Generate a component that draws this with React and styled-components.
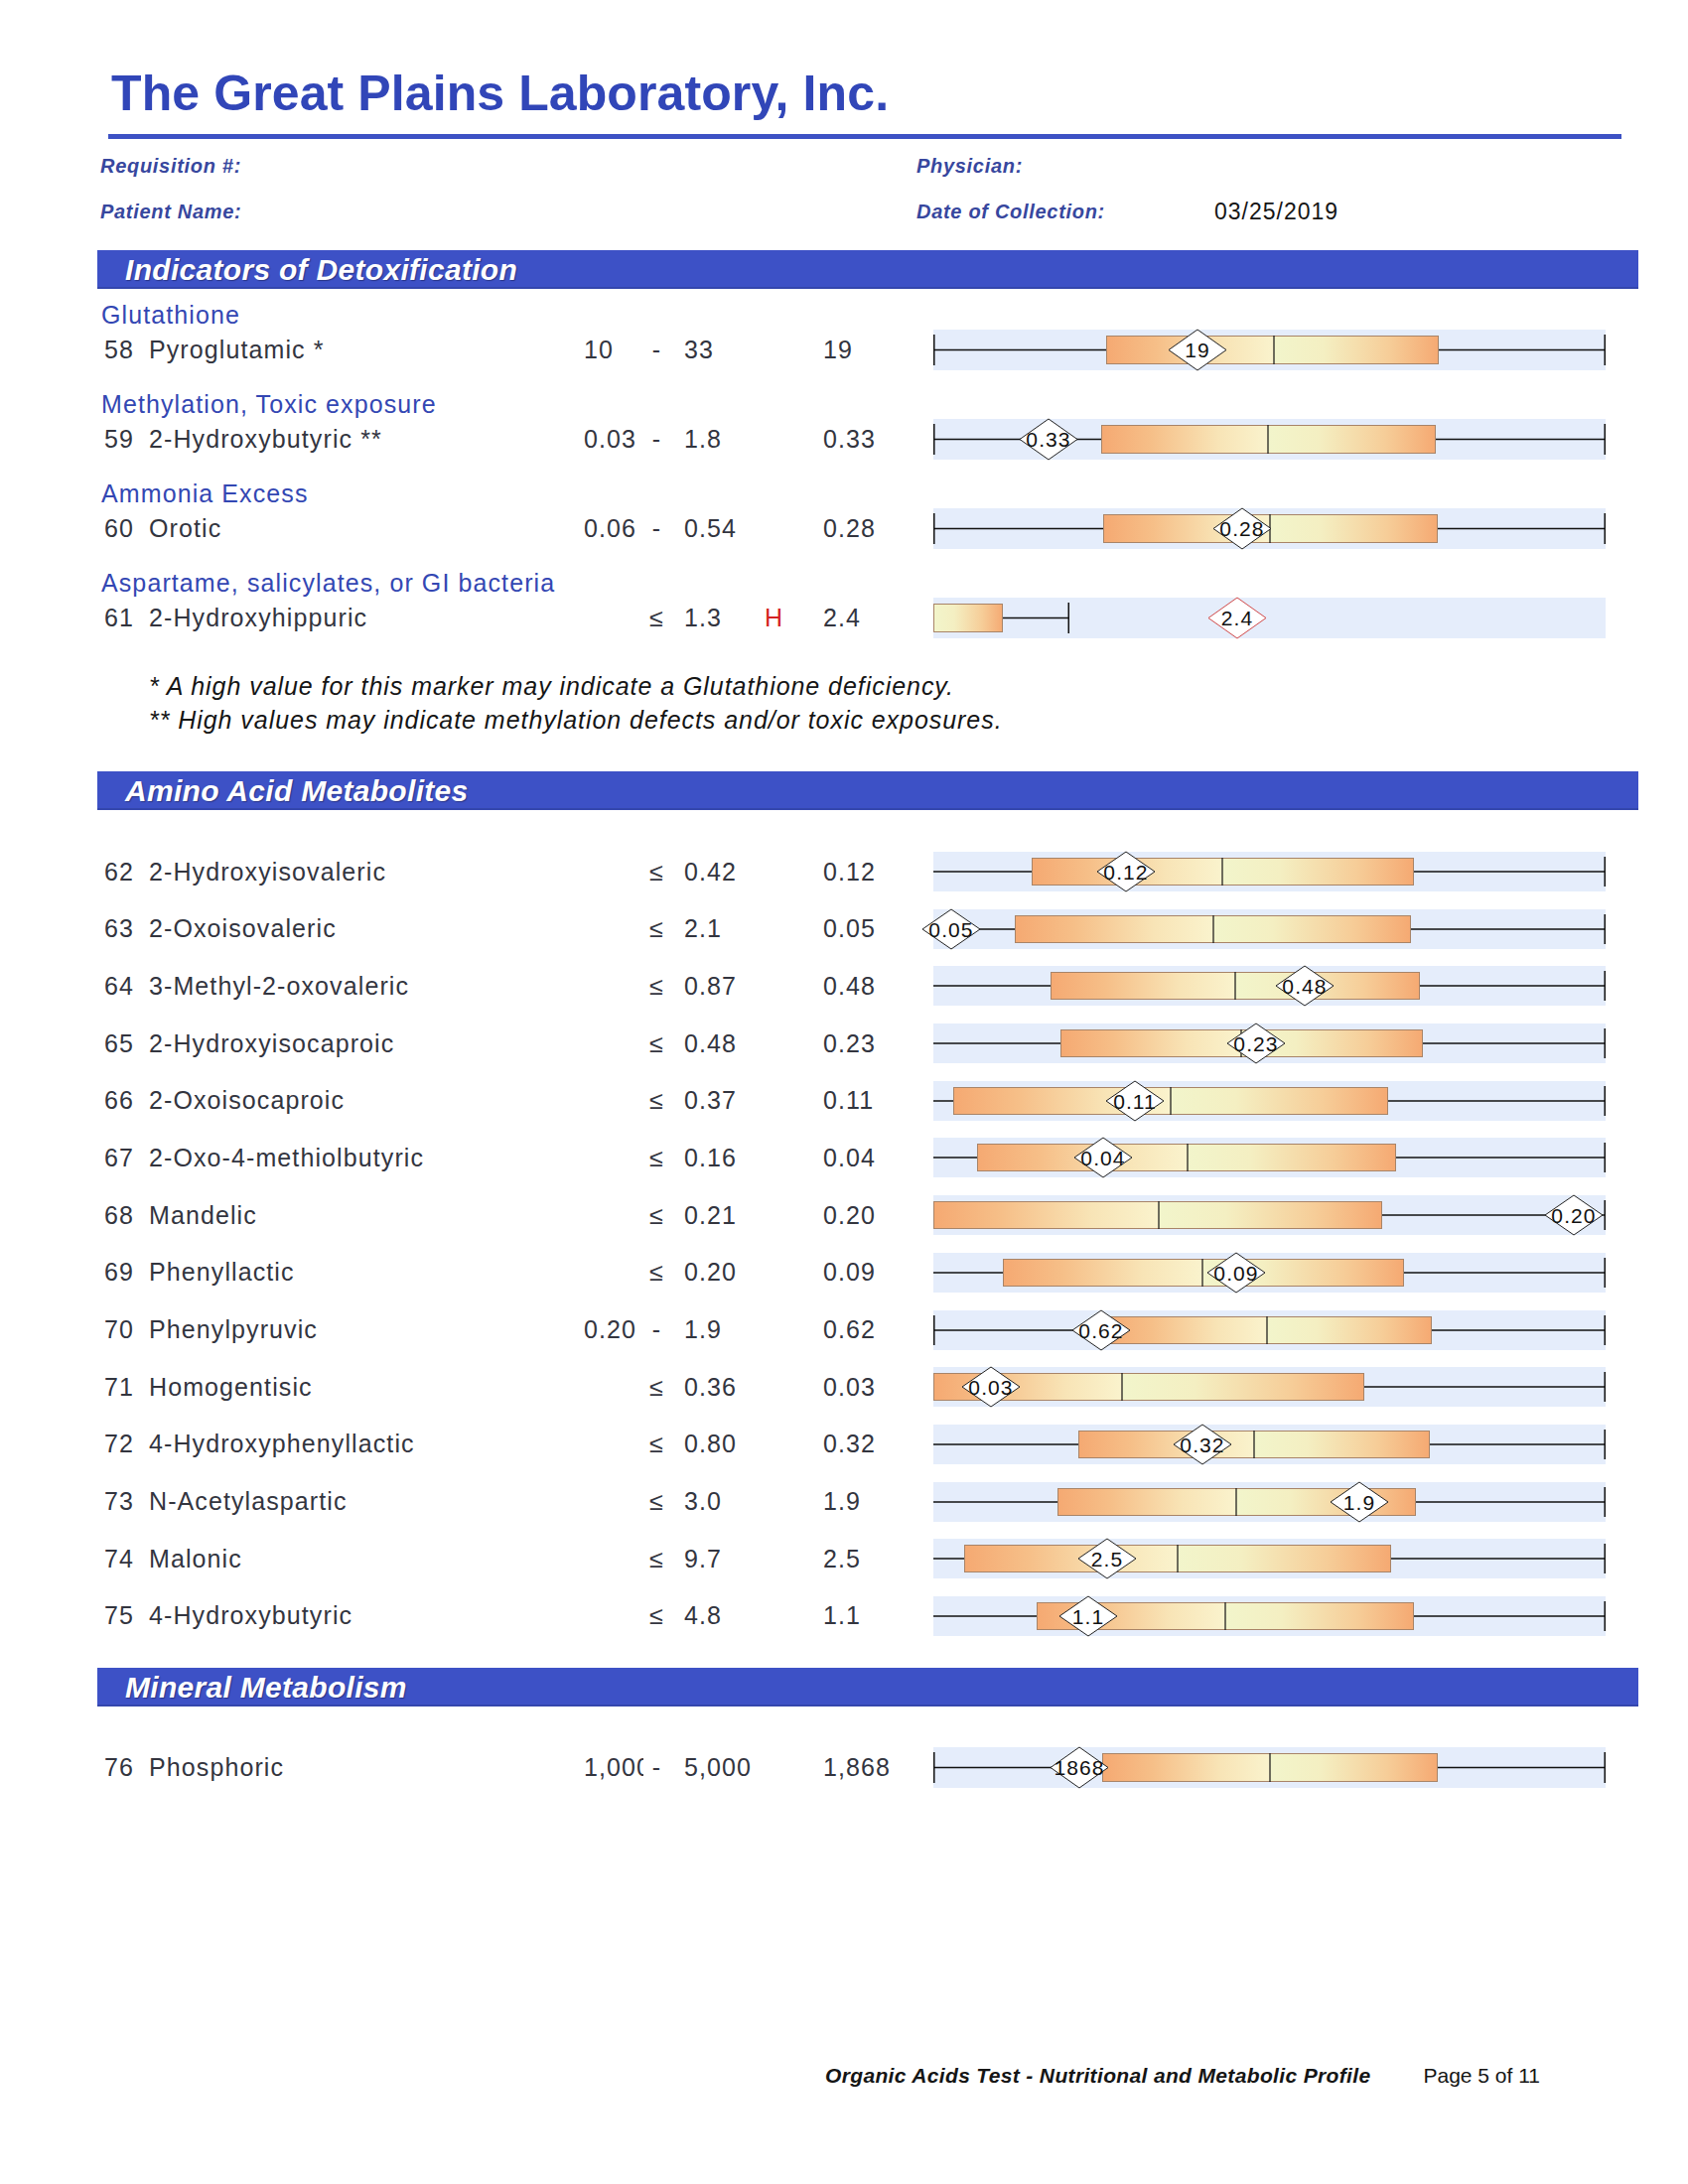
import React, { useId } from "react";
import styled, { createGlobalStyle } from "styled-components";

const Global = createGlobalStyle`
  html, body { margin: 0; padding: 0; background: #ffffff; }
  body { font-family: "Liberation Sans", Arial, sans-serif; }
`;

const Page = styled.div`
  width: 1700px;
  min-height: 2200px;
  box-sizing: border-box;
  padding: 64px 50px 0 98px;
  background: #fff;
  display: flex;
  flex-direction: column;
`;

const Title = styled.h1`
  margin: 0 0 0 14px;
  height: 60px;
  line-height: 60px;
  font-family: "Liberation Sans", Arial, sans-serif;
  font-weight: bold;
  font-size: 50px;
  letter-spacing: 0.1px;
  color: #3146b8;
`;

const Rule = styled.div`
  margin: 11px 0 0 11px;
  width: 1524px;
  height: 5px;
  background: #3d52c4;
`;

const Meta = styled.div`
  display: grid;
  grid-template-columns: 822px 300px 1fr;
  grid-auto-rows: 46px;
  align-items: center;
  margin: 4px 0 0 3px;
`;

const MetaLabel = styled.div`
  font-weight: bold;
  font-style: italic;
  font-size: 20px;
  letter-spacing: 0.7px;
  color: #37479e;
`;

const MetaValue = styled.div`
  font-size: 23px;
  letter-spacing: 1px;
  color: #151515;
`;

const SectionBar = styled.div`
  margin-top: ${(p) => p.$top}px;
  height: 39px;
  line-height: 39px;
  background: #3d51c6;
  box-shadow: inset 0 -2px 0 #3446ad;
  color: #ffffff;
  font-weight: bold;
  font-style: italic;
  font-size: 30px;
  letter-spacing: 0.3px;
  padding-left: 28px;
  text-shadow: 1px 1px 1px rgba(20, 20, 60, 0.45);
`;

const Groups = styled.div`
  display: flex;
  flex-direction: column;
  gap: ${(p) => p.$gap}px;
  margin-top: ${(p) => p.$top}px;
`;

const Group = styled.div`
  display: flex;
  flex-direction: column;
`;

const SubHeading = styled.div`
  height: 30px;
  line-height: 30px;
  margin-left: 4px;
  font-size: 25px;
  letter-spacing: 1.1px;
  color: #3347b3;
`;

const Row = styled.div`
  display: grid;
  grid-template-columns: 45px 438px 60px 41px 81px 59px 111px 677px;
  align-items: center;
  height: ${(p) => p.$h}px;
  margin-left: 7px;
  font-size: 25px;
  letter-spacing: 1.1px;
  color: #33353f;
  white-space: nowrap;
`;

const Cell = styled.div`
  overflow: ${(p) => (p.$clip ? "hidden" : "visible")};
`;

const Sep = styled.div`
  text-align: center;
  padding: 0 18px 0 4px;
`;

const Flag = styled.div`
  color: #d42222;
`;

const Footnotes = styled.div`
  margin: 31px 0 0 52px;
  display: flex;
  flex-direction: column;
`;

const Footnote = styled.div`
  height: 34px;
  line-height: 34px;
  font-style: italic;
  font-size: 25px;
  letter-spacing: 0.95px;
  color: #151515;
`;

const Footer = styled.div`
  margin-top: 275px;
  height: 30px;
  line-height: 30px;
  display: flex;
  justify-content: flex-end;
  gap: 53px;
  padding-right: 99px;
  font-size: 21px;
  color: #151515;
`;

const FooterTitle = styled.span`
  font-weight: bold;
  font-style: italic;
  letter-spacing: 0.35px;
`;

const ChartSvg = styled.svg`
  display: block;
  overflow: visible;
`;

const W = 677;

function Chart({ h, c, label }) {
  const id = useId().replace(/:/g, "");
  const boxTop = 6;
  const boxH = h - 12;
  const cy = boxTop + boxH / 2;
  const we = c.we ?? W;
  const dw = 29;
  const dh = h / 2;
  return (
    <ChartSvg width={W} height={h} viewBox={`0 0 ${W} ${h}`}>
      <defs>
        <linearGradient id={`l${id}`} x1="0" x2="1" y1="0" y2="0">
          <stop offset="0" stopColor="#f5a972" />
          <stop offset="0.3" stopColor="#f6bf88" />
          <stop offset="0.7" stopColor="#f8e4b6" />
          <stop offset="1" stopColor="#faf3cd" />
        </linearGradient>
        <linearGradient id={`r${id}`} x1="0" x2="1" y1="0" y2="0">
          <stop offset="0" stopColor="#f2f5cb" />
          <stop offset="0.3" stopColor="#f4efc2" />
          <stop offset="0.7" stopColor="#f6cd98" />
          <stop offset="1" stopColor="#f5a972" />
        </linearGradient>
      </defs>
      <rect x="0" y="0" width={W} height={h} fill="#e5edfb" />
      {c.l > 0 && <line x1="0" x2={c.l} y1={cy} y2={cy} stroke="#111" strokeWidth="1.5" />}
      {c.r < we && <line x1={c.r} x2={we} y1={cy} y2={cy} stroke="#111" strokeWidth="1.5" />}
      {c.lt && <line x1="0.75" x2="0.75" y1={boxTop - 1} y2={boxTop + boxH + 1} stroke="#111" strokeWidth="1.5" />}
      <line x1={we - 0.75} x2={we - 0.75} y1={boxTop - 1} y2={boxTop + boxH + 1} stroke="#111" strokeWidth="1.5" />
      {c.m > c.l && <rect x={c.l} y={boxTop} width={c.m - c.l} height={boxH} fill={`url(#l${id})`} />}
      <rect x={c.m} y={boxTop} width={c.r - c.m} height={boxH} fill={`url(#r${id})`} />
      <rect x={c.l + 0.5} y={boxTop + 0.5} width={c.r - c.l - 1} height={boxH - 1} fill="none" stroke="#a88468" strokeWidth="1" />
      {!c.noMed && <line x1={c.m} x2={c.m} y1={boxTop} y2={boxTop + boxH} stroke="#111" strokeWidth="1.2" />}
      <polygon
        points={`${c.d},${cy - dh} ${c.d + dw},${cy} ${c.d},${cy + dh} ${c.d - dw},${cy}`}
        fill="#ffffff"
        stroke={c.red ? "#d04848" : "#222"}
        strokeWidth="1"
      />
      <text
        x={c.d}
        y={cy + 7.5}
        textAnchor="middle"
        fontFamily="'Liberation Sans', Arial, sans-serif"
        fontSize="21"
        fill="#111"
      >
        {label}
      </text>
    </ChartSvg>
  );
}

function DataRow({ r, h }) {
  return (
    <Row $h={h}>
      <Cell>{r.num}</Cell>
      <Cell>{r.name}</Cell>
      <Cell $clip>{r.low}</Cell>
      <Sep>{r.sep}</Sep>
      <Cell>{r.high}</Cell>
      <Flag>{r.flag}</Flag>
      <Cell>{r.val}</Cell>
      <Chart h={h} c={r.c} label={r.dl ?? r.val} />
    </Row>
  );
}

const detox = [
  { sub: "Glutathione", num: 58, name: "Pyroglutamic *", low: "10", sep: "-", high: "33", val: "19", c: { l: 174, m: 343, r: 509, d: 266, lt: true } },
  { sub: "Methylation, Toxic exposure", num: 59, name: "2-Hydroxybutyric **", low: "0.03", sep: "-", high: "1.8", val: "0.33", c: { l: 169, m: 337, r: 506, d: 116, lt: true } },
  { sub: "Ammonia Excess", num: 60, name: "Orotic", low: "0.06", sep: "-", high: "0.54", val: "0.28", c: { l: 171, m: 339, r: 508, d: 311, lt: true } },
  { sub: "Aspartame, salicylates, or GI bacteria", num: 61, name: "2-Hydroxyhippuric", low: "", sep: "≤", high: "1.3", flag: "H", val: "2.4", c: { l: 0, m: 0, r: 70, d: 306, we: 137, noMed: true, red: true } },
];

const amino = [
  { num: 62, name: "2-Hydroxyisovaleric", sep: "≤", high: "0.42", val: "0.12", c: { l: 99, m: 291, r: 484, d: 194 } },
  { num: 63, name: "2-Oxoisovaleric", sep: "≤", high: "2.1", val: "0.05", c: { l: 82, m: 282, r: 481, d: 18 } },
  { num: 64, name: "3-Methyl-2-oxovaleric", sep: "≤", high: "0.87", val: "0.48", c: { l: 118, m: 304, r: 490, d: 374 } },
  { num: 65, name: "2-Hydroxyisocaproic", sep: "≤", high: "0.48", val: "0.23", c: { l: 128, m: 310, r: 493, d: 325 } },
  { num: 66, name: "2-Oxoisocaproic", sep: "≤", high: "0.37", val: "0.11", c: { l: 20, m: 239, r: 458, d: 203 } },
  { num: 67, name: "2-Oxo-4-methiolbutyric", sep: "≤", high: "0.16", val: "0.04", c: { l: 44, m: 256, r: 466, d: 171 } },
  { num: 68, name: "Mandelic", sep: "≤", high: "0.21", val: "0.20", c: { l: 0, m: 227, r: 452, d: 645 } },
  { num: 69, name: "Phenyllactic", sep: "≤", high: "0.20", val: "0.09", c: { l: 70, m: 271, r: 474, d: 305 } },
  { num: 70, name: "Phenylpyruvic", low: "0.20", sep: "-", high: "1.9", val: "0.62", c: { l: 170, m: 336, r: 502, d: 169, lt: true } },
  { num: 71, name: "Homogentisic", sep: "≤", high: "0.36", val: "0.03", c: { l: 0, m: 190, r: 434, d: 58 } },
  { num: 72, name: "4-Hydroxyphenyllactic", sep: "≤", high: "0.80", val: "0.32", c: { l: 146, m: 323, r: 500, d: 271 } },
  { num: 73, name: "N-Acetylaspartic", sep: "≤", high: "3.0", val: "1.9", c: { l: 125, m: 305, r: 486, d: 429 } },
  { num: 74, name: "Malonic", sep: "≤", high: "9.7", val: "2.5", c: { l: 31, m: 246, r: 461, d: 175 } },
  { num: 75, name: "4-Hydroxybutyric", sep: "≤", high: "4.8", val: "1.1", c: { l: 104, m: 294, r: 484, d: 156 } },
];

const mineral = [
  { num: 76, name: "Phosphoric", low: "1,000", sep: "-", high: "5,000", val: "1,868", dl: "1868", c: { l: 170, m: 339, r: 508, d: 147, lt: true } },
];

export default function App() {
  return (
    <>
      <Global />
      <Page>
        <Title>The Great Plains Laboratory, Inc.</Title>
        <Rule />
        <Meta>
          <MetaLabel>Requisition #:</MetaLabel>
          <MetaLabel>Physician:</MetaLabel>
          <MetaValue />
          <MetaLabel>Patient Name:</MetaLabel>
          <MetaLabel>Date of Collection:</MetaLabel>
          <MetaValue>03/25/2019</MetaValue>
        </Meta>

        <SectionBar $top={16}>Indicators of Detoxification</SectionBar>
        <Groups $top={11} $gap={19}>
          {detox.map((r) => (
            <Group key={r.num}>
              <SubHeading>{r.sub}</SubHeading>
              <DataRow r={r} h={41} />
            </Group>
          ))}
        </Groups>
        <Footnotes>
          <Footnote>* A high value for this marker may indicate a Glutathione deficiency.</Footnote>
          <Footnote>** High values may indicate methylation defects and/or toxic exposures.</Footnote>
        </Footnotes>

        <SectionBar $top={35}>Amino Acid Metabolites</SectionBar>
        <Groups $top={42} $gap={17.7}>
          {amino.map((r) => (
            <DataRow key={r.num} r={r} h={40} />
          ))}
        </Groups>

        <SectionBar $top={32}>Mineral Metabolism</SectionBar>
        <Groups $top={41} $gap={0}>
          {mineral.map((r) => (
            <DataRow key={r.num} r={r} h={41} />
          ))}
        </Groups>

        <Footer>
          <FooterTitle>Organic Acids Test - Nutritional and Metabolic Profile</FooterTitle>
          <span>Page 5 of 11</span>
        </Footer>
      </Page>
    </>
  );
}
